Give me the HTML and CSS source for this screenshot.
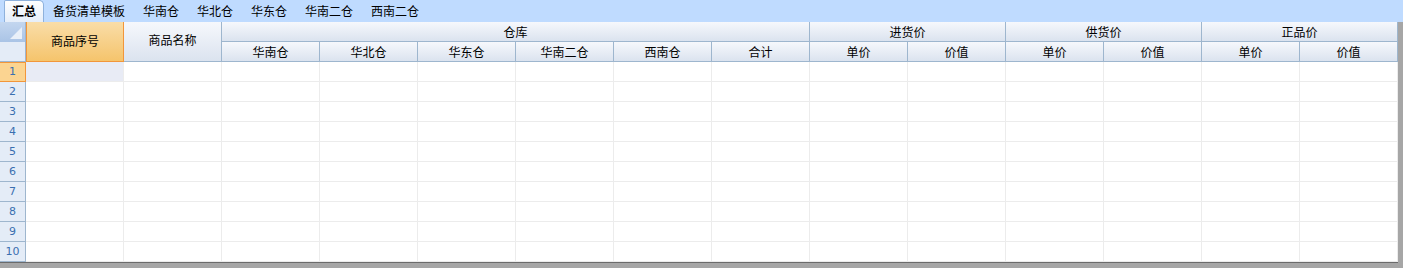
FILE: index.html
```html
<!DOCTYPE html>
<html lang="zh">
<head>
  <meta charset="UTF-8" />
  <title>汇总</title>
  <link rel="stylesheet" href="styles.css">
</head>
<body>
<div class="tabs">
  <div class="tab active">汇总</div>
  <div class="tab">备货清单模板</div>
  <div class="tab">华南仓</div>
  <div class="tab">华北仓</div>
  <div class="tab">华东仓</div>
  <div class="tab">华南二仓</div>
  <div class="tab">西南二仓</div>
</div>

<div class="sheet" id="sheet">
  <div class="corner-top"><span class="tri"></span></div>
  <div class="hd rows2 sel">商品序号</div>
  <div class="hd rows2">商品名称</div>
  <div class="hd span6">仓库</div>
  <div class="hd span2">进货价</div>
  <div class="hd span2">供货价</div>
  <div class="hd span2">正品价</div>

  <div class="corner-bottom"></div>
  <div class="hd">华南仓</div>
  <div class="hd">华北仓</div>
  <div class="hd">华东仓</div>
  <div class="hd">华南二仓</div>
  <div class="hd">西南仓</div>
  <div class="hd">合计</div>
  <div class="hd">单价</div>
  <div class="hd">价值</div>
  <div class="hd">单价</div>
  <div class="hd">价值</div>
  <div class="hd">单价</div>
  <div class="hd">价值</div>
</div>

<script>
  const sheet = document.getElementById('sheet');
  for (let r = 1; r <= 10; r++) {
    const rh = document.createElement('div');
    rh.className = 'rowhead' + (r === 1 ? ' sel' : '');
    rh.textContent = r;
    sheet.appendChild(rh);
    for (let c = 0; c < 14; c++) {
      const cell = document.createElement('div');
      cell.className = 'cell' + (r === 1 && c === 0 ? ' active' : '');
      sheet.appendChild(cell);
    }
  }
</script>
</body>
</html>
```

FILE: styles.css
```css
body {
  margin: 0;
  background: #a6a6a6;
  font-family: "Noto Sans CJK SC", "Liberation Sans", sans-serif;
  font-size: 12px;
  color: #000;
  overflow: hidden;
}

.tabs {
  display: flex;
  align-items: flex-end;
  height: 22px;
  background: #bfdbff;
  box-sizing: border-box;
  padding-left: 4px;
}

.tab {
  height: 21px;
  line-height: 20px;
  padding: 0 9px;
  white-space: nowrap;
}

.tab.active {
  width: 40px;
  padding: 0;
  box-sizing: border-box;
  text-align: center;
  font-weight: bold;
  height: 22px;
  background: linear-gradient(#fdfeff, #e6eef9);
  border: 1px solid #8eb1dc;
  border-bottom: none;
  border-radius: 2px 5px 0 0;
}

.sheet {
  display: grid;
  grid-template-columns: 26px repeat(14, 98px);
  grid-template-rows: repeat(12, 20px);
  width: max-content;
  background: #fff;
  border-bottom: 1px solid #6b6b6b;
}

.sheet > div {
  box-sizing: border-box;
}

.corner-top {
  position: relative;
  background: linear-gradient(#c3d6ef, #aac4e6);
  border-right: 1px solid #9eb6ce;
}

.corner-top .tri {
  position: absolute;
  right: 3px;
  bottom: 3px;
  width: 0;
  height: 0;
  border-left: 12px solid transparent;
  border-bottom: 12px solid #e9f0f9;
}

.corner-bottom {
  background: #e4ecf7;
  border-right: 1px solid #9eb6ce;
  border-bottom: 1px solid #9eb6ce;
}

.hd {
  background: linear-gradient(#f6f8fc, #dbe3ef);
  border-right: 1px solid #9eb6ce;
  border-bottom: 1px solid #9eb6ce;
  text-align: center;
  line-height: 19px;
  white-space: nowrap;
}

.hd.rows2 {
  grid-row: span 2;
  line-height: 36px;
}

.hd.span6 { grid-column: span 6; }
.hd.span2 { grid-column: span 2; }

.hd.sel {
  background: linear-gradient(#f9dda8, #f5c46c);
  border: 1px solid #f2963a;
  border-top: none;
  line-height: 38px;
}

.rowhead {
  background: #e4ecf7;
  border-right: 1px solid #9eb6ce;
  border-bottom: 1px solid #9eb6ce;
  color: #3a6fb0;
  font-family: "DejaVu Sans", sans-serif;
  font-size: 11px;
  line-height: 19px;
  text-align: center;
}

.rowhead.sel {
  background: #fbd491;
  border: 1px solid #f2963a;
  border-left: none;
  line-height: 18px;
}

.cell {
  border-right: 1px solid #ececec;
  border-bottom: 1px solid #ececec;
}

.cell.active {
  background: #e8ebf5;
}
```
